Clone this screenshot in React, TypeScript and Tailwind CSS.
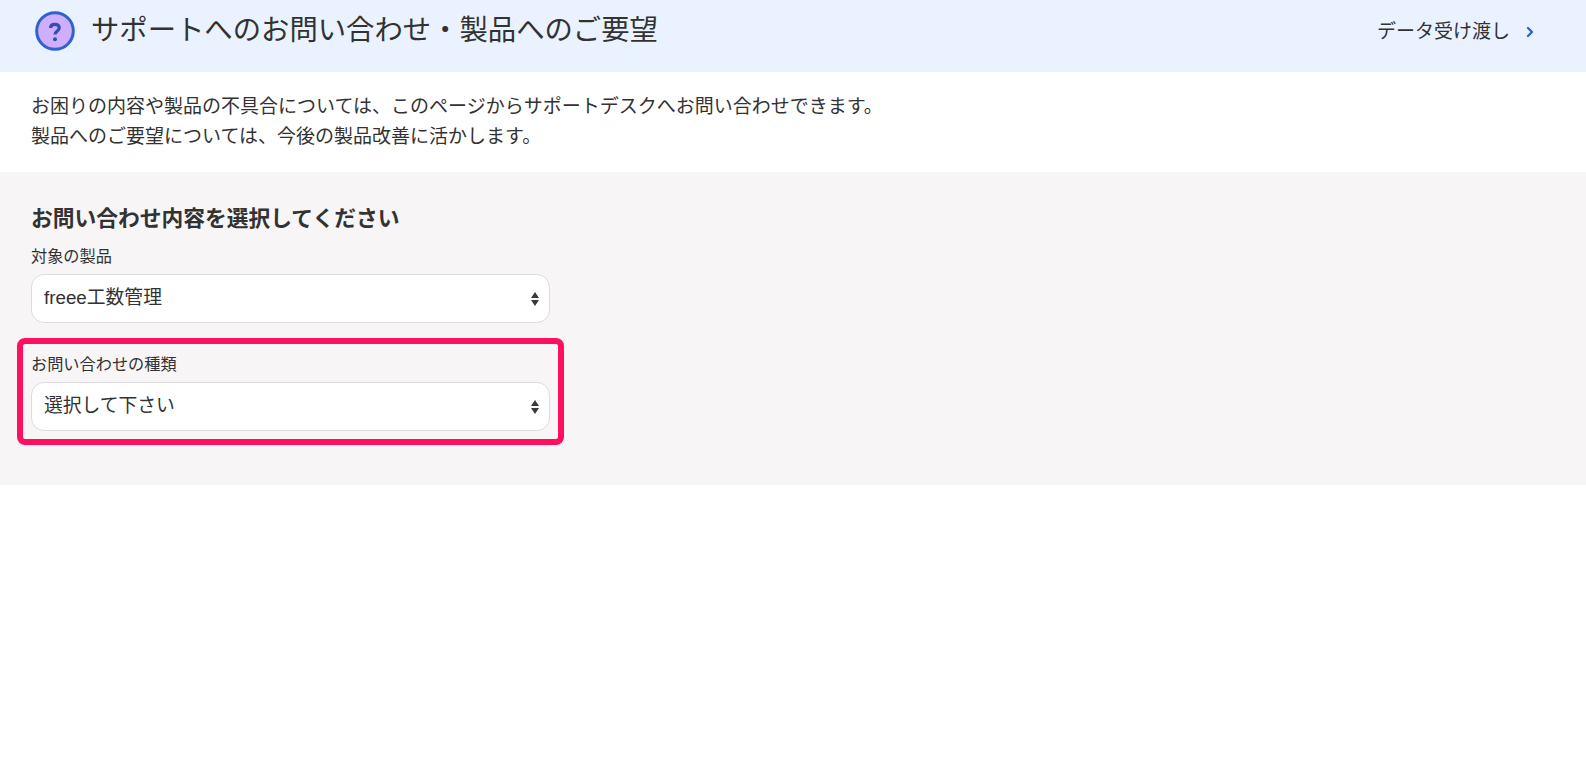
import { ChevronRight } from 'lucide-react';

const font = "font-['Liberation_Sans','Noto_Sans_CJK_JP',sans-serif]";

function SelectBox({ value }: { value: string }) {
  return (
    <div className="h-[49px] w-[519px] rounded-[13px] border border-[#dedcdc] bg-white pl-[12px] pr-[10px] flex items-center justify-between text-[18.8px] text-[#323232]">
      <span>{value}</span>
      <svg width="8" height="14" viewBox="0 0 8 14" fill="#3a3a3a">
        <path d="M4 0 L8 6 H0 Z" />
        <path d="M0 8 H8 L4 14 Z" />
      </svg>
    </div>
  );
}

function HelpIcon() {
  return (
    <svg className="mt-[2px]" width="40" height="40" viewBox="0 0 40 40">
      <circle cx="20" cy="20" r="18.3" fill="#cfaefb" stroke="#2f62d0" strokeWidth="3" />
      <path d="M15.6 17 C15.6 14.6 17.4 13.4 19.8 13.4 C22.4 13.4 24.2 14.8 24.2 17 C24.2 20 20 20 20 23.6" fill="none" stroke="#2c4fb4" strokeWidth="3.2" />
      <circle cx="20" cy="28.2" r="2" fill="#2c4fb4" />
    </svg>
  );
}

export default function App() {
  return (
    <div className={`${font} min-h-[765px] bg-white text-[#323232]`}>
      <header className="h-[72px] bg-[#e9f2fe] pl-[35px] pr-[48px] pb-[12px] flex items-center justify-between">
        <div className="flex items-center gap-[16px]">
          <HelpIcon />
          <h1 className="text-[28.35px] leading-[40px]">サポートへのお問い合わせ・製品へのご要望</h1>
        </div>
        <a className="mt-[4px] flex items-center gap-[12px] text-[19px]">
          <span>データ受け渡し</span>
          <ChevronRight className="w-[16px] h-[16px] text-[#2f62d0]" strokeWidth={3.5} />
        </a>
      </header>

      <section className="h-[100px] px-[31px] pt-[20px] text-[19px] leading-[29.5px]">
        <p>お困りの内容や製品の不具合については、このページからサポートデスクへお問い合わせできます。</p>
        <p>製品へのご要望については、今後の製品改善に活かします。</p>
      </section>

      <section className="h-[313px] bg-[#f7f5f6] pl-[17px] pt-[32px]">
        <h2 className="pl-[14px] text-[21.75px] leading-[30px] font-bold">お問い合わせ内容を選択してください</h2>
        <div className="pl-[14px] mt-[10px]">
          <label className="block text-[16.2px] leading-[24px] mb-[6px]">対象の製品</label>
          <SelectBox value="freee工数管理" />
        </div>
        <div className="mt-[15px] w-[547px] h-[107px] rounded-[8px] border-[6px] border-[#ff0f5f] pl-[8px] pt-[8px]">
          <label className="block text-[16.2px] leading-[24px] mb-[6px]">お問い合わせの種類</label>
          <SelectBox value="選択して下さい" />
        </div>
      </section>
    </div>
  );
}
